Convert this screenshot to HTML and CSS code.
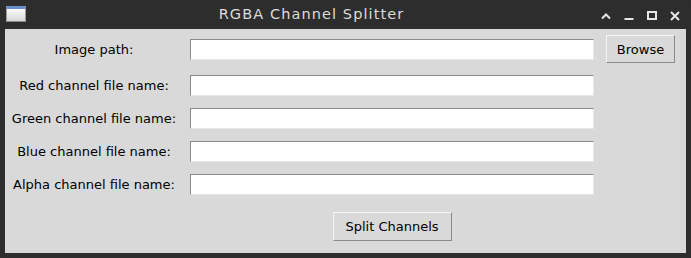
FILE: index.html
```html
<!DOCTYPE html>
<html>
<head>
<meta charset="utf-8">
<link rel="stylesheet" href="styles.css">
</head>
<body>
<div class="window">
  <div class="titlebar">
    <div class="app-icon"></div>
    <div class="title">RGBA Channel Splitter</div>
    <div class="controls">
      <svg class="ctl" width="10" height="10" viewBox="0 0 10 10"><path d="M1 7.5 L5 3.5 L9 7.5" fill="none" stroke="#e6e6e6" stroke-width="2"/></svg>
      <svg class="ctl" width="10" height="10" viewBox="0 0 10 10"><path d="M0.5 8 H9.5" fill="none" stroke="#e6e6e6" stroke-width="2"/></svg>
      <svg class="ctl" width="10" height="10" viewBox="0 0 10 10"><rect x="1" y="1" width="8" height="7" fill="none" stroke="#e6e6e6" stroke-width="2"/></svg>
      <svg class="ctl" width="10" height="10" viewBox="0 0 10 10"><path d="M1 1 L9 9 M9 1 L1 9" fill="none" stroke="#e6e6e6" stroke-width="2"/></svg>
    </div>
  </div>
  <div class="content">
    <div class="form">
      <div class="label">Image path:</div>
      <div class="field"><div class="entry"></div></div>
      <div class="btncell"><div class="button browse">Browse</div></div>

      <div class="label">Red channel file name:</div>
      <div class="field"><div class="entry"></div></div>
      <div></div>

      <div class="label">Green channel file name:</div>
      <div class="field"><div class="entry"></div></div>
      <div></div>

      <div class="label">Blue channel file name:</div>
      <div class="field"><div class="entry"></div></div>
      <div></div>

      <div class="label">Alpha channel file name:</div>
      <div class="field"><div class="entry"></div></div>
      <div></div>

      <div></div>
      <div class="split-cell"><div class="button split">Split Channels</div></div>
      <div></div>
    </div>
  </div>
</div>
</body>
</html>
```
FILE: styles.css
```css
html, body {
  margin: 0;
  padding: 0;
  background: #2d2d2d;
}
.window {
  width: 691px;
  height: 258px;
  box-sizing: border-box;
  background: #2d2d2d;
  padding: 0 5px 5px 5px;
  display: flex;
  flex-direction: column;
  border-radius: 6px 6px 0 0;
}
.titlebar {
  height: 29px;
  display: flex;
  align-items: center;
  flex: none;
}
.app-icon {
  width: 20px;
  height: 16px;
  margin-left: 1px;
  margin-top: -1px;
  box-sizing: border-box;
  background: linear-gradient(#fafafa, #d8d8d8);
  border-top: 3px solid #6a8fc8;
  border-left: 1px solid #9a9a9a;
  border-right: 1px solid #9a9a9a;
  border-bottom: 1px solid #8a8a8a;
}
.title {
  flex: 1;
  text-align: center;
  color: #dcdcdc;
  font-family: "DejaVu Sans", sans-serif;
  font-size: 14.5px;
  letter-spacing: 1.1px;
  margin-top: -1px;
  padding-right: 4px;
}
.controls {
  display: flex;
  align-items: center;
  gap: 13px;
  margin-right: 6px;
  margin-top: 2px;
}
.content {
  flex: 1;
  background: #d9d9d9;
  font-family: "DejaVu Sans", sans-serif;
  font-size: 13px;
  color: #000;
}
.form {
  display: grid;
  grid-template-columns: 178px 404px 74px;
  grid-template-rows: 40px repeat(4, 33px) 1fr;
  column-gap: 7px;
  height: 100%;
}
.form > .btncell {
  margin-left: 5px;
}
.label {
  display: flex;
  align-items: center;
  justify-content: center;
  white-space: nowrap;
}
.field {
  display: flex;
  align-items: center;
}
.entry {
  width: 100%;
  height: 21px;
  box-sizing: border-box;
  background: #fff;
  border-style: solid;
  border-width: 1px;
  border-color: #8a8a8a #e6e6e6 #e6e6e6 #8a8a8a;
}
.btncell {
  display: flex;
  align-items: center;
}
.button {
  box-sizing: border-box;
  display: flex;
  align-items: center;
  justify-content: center;
  background: #d9d9d9;
  border-style: solid;
  border-width: 1px;
  border-color: #f4f4f4 #8a8a8a #8a8a8a #f4f4f4;
  color: #000;
  font-size: 13px;
}
.browse {
  width: 74px;
  height: 28px;
}
.split-cell {
  display: flex;
  align-items: center;
  justify-content: center;
  padding-bottom: 1px;
}
.split {
  width: 119px;
  height: 29px;
}
```
